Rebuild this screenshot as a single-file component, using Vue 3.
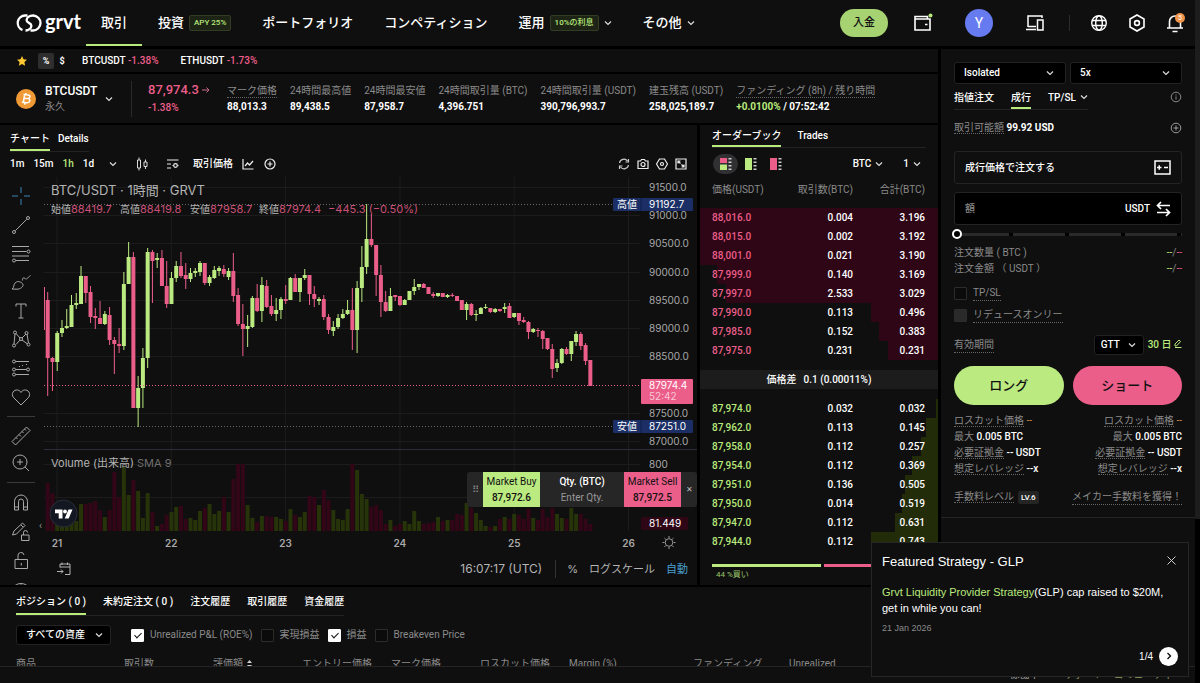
<template>
  <div class="app">
    <div class="content">
      <!-- Top navigation -->
      <header class="topbar">
        <a class="logo" href="#">
          <svg width="26" height="18" viewBox="0 0 26 18" fill="none" stroke="#fff" stroke-width="2.300">
            <path d="M11.500 1.500H9A7.500 7.500 0 0 0 6.500 16" />
            <path d="M14.500 16.500H17A7.500 7.500 0 0 0 17 1.500" />
            <path d="M17.200 1.500C13 1.500 10.600 3.800 10.600 6.300C10.600 9.200 15.400 8.600 15.400 11.700C15.400 14.500 12.500 16.600 9.500 16.500" />
          </svg>
          <span>grvt</span>
        </a>
        <nav class="nav">
          <a class="nav-item active" href="#">取引</a>
          <a class="nav-item" href="#">投資 <span class="badge">APY 25%</span></a>
          <a class="nav-item" href="#">ポートフォリオ</a>
          <a class="nav-item" href="#">コンペティション</a>
          <a class="nav-item" href="#">運用 <span class="badge">10%の利息</span>
            <svg class="chev" viewBox="0 0 8 8"><path d="M1 2.500l3 3 3-3" /></svg>
          </a>
          <a class="nav-item" href="#">その他
            <svg class="chev" viewBox="0 0 8 8"><path d="M1 2.500l3 3 3-3" /></svg>
          </a>
        </nav>
        <div class="top-actions">
          <button class="deposit">入金</button>
          <button class="icon-btn wallet" aria-label="wallet">
            <svg width="20" height="20" viewBox="0 0 20 20" fill="none" stroke="#fff" stroke-width="1.600">
              <path d="M14.500 6V3.500H2V17h15V6H2M12 11.500h2.500" />
              <circle cx="17.500" cy="2.500" r="2" fill="#b9ea7c" stroke="none" />
            </svg>
          </button>
          <button class="avatar">Y</button>
          <button class="icon-btn devices" aria-label="devices">
            <svg width="20" height="20" viewBox="0 0 20 20" fill="none" stroke="#fff" stroke-width="1.500">
              <path d="M17 5V3H3v11M1 16.500h10M12.500 7h5.500v10h-5.500zM3 13.500h8" />
            </svg>
          </button>
          <span class="divider"></span>
          <button class="icon-btn" aria-label="language">
            <svg width="18" height="18" viewBox="0 0 18 18" fill="none" stroke="#fff" stroke-width="1.400">
              <circle cx="9" cy="9" r="7.300" />
              <ellipse cx="9" cy="9" rx="3.300" ry="7.300" />
              <path d="M2 6.500h14M2 11.500h14" />
            </svg>
          </button>
          <button class="icon-btn" aria-label="settings">
            <svg width="18" height="18" viewBox="0 0 18 18" fill="none" stroke="#fff" stroke-width="1.600">
              <path d="M9 1l7 4v8l-7 4-7-4V5z" />
              <circle cx="9" cy="9" r="2.400" />
            </svg>
          </button>
          <button class="icon-btn bell" aria-label="notifications">
            <svg width="18" height="20" viewBox="0 0 18 20" fill="none" stroke="#fff" stroke-width="1.600">
              <path d="M3.500 14.500V8.500a5.500 5.500 0 0 1 11 0v6M1 15h16M6.500 18.500h5" />
            </svg>
            <span class="count">5</span>
          </button>
        </div>
      </header>

      <div class="main">
        <div class="left">
          <!-- Favourites ticker -->
          <div class="panel ticker">
            <svg width="10" height="10" viewBox="0 0 20 20" fill="#ffc831">
              <path d="M10 0l3 6.600 7 .8-5.200 4.800L16.200 19.500 10 16l-6.200 3.500 1.400-7.300L0 7.400l7-.8z" />
            </svg>
            <button class="unit on">%</button>
            <button class="unit">$</button>
            <a v-for="t in tickers" :key="t.name" class="tick" href="#">{{ t.name }} <em>{{ t.change }}</em></a>
          </div>

          <!-- Instrument summary -->
          <div class="panel summary">
            <svg class="coin" width="20" height="20" viewBox="0 0 20 20">
              <circle cx="10" cy="10" r="10" fill="#f09a36" />
              <path d="M7.500 5.500l5 .6c2 .4 2 3-.5 3.400 3 .5 2.200 4.500-1 4.300l-5-.6M8.700 5.700l-1.400 7.700M8 9.200l4.500.4M10 4l-.3 2M9 13.500l-.3 2.200" fill="none" stroke="#fff" stroke-width="1.500" />
            </svg>
            <div class="pair">
              <strong>BTCUSDT</strong>
              <span>永久</span>
            </div>
            <svg class="chev" viewBox="0 0 8 8"><path d="M1 2.500l3 3 3-3" /></svg>
            <div class="price">
              <div>87,974.3 <svg width="8" height="8" viewBox="0 0 8 8" fill="none" stroke="#c56b86"><path d="M0 4h7M4.500 1.500L7 4 4.500 6.500" /></svg></div>
              <span>-1.38%</span>
            </div>
            <dl v-for="s in stats" :key="s.label" class="stat">
              <dt><span :class="{ hint: s.hint }">{{ s.label }}</span></dt>
              <dd><span class="up">{{ s.rate }}</span>{{ s.value }}</dd>
            </dl>
          </div>

          <div class="trade-row">
            <!-- Chart -->
            <section class="panel chart-panel">
              <div class="chart-tabs">
                <a class="active" href="#">チャート</a>
                <a href="#">Details</a>
              </div>
              <div class="toolbar">
                <button>1m</button>
                <button>15m</button>
                <button class="on">1h</button>
                <button>1d</button>
                <button class="more" aria-label="intervals"><svg class="chev" viewBox="0 0 8 8"><path d="M1 2.500l3 3 3-3" /></svg></button>
                <button class="candle-btn" aria-label="candles">
                  <svg width="12" height="14" viewBox="0 0 12 14" fill="none" stroke="#ddd">
                    <path d="M1.500 3h3v8h-3zM3 .5V3M3 11v2.500M8 5h3v4.500H8zM9.500 2.500V5M9.500 9.500V12" />
                  </svg>
                </button>
                <button class="ind-btn" aria-label="indicators">
                  <svg width="12" height="10" viewBox="0 0 12 10" fill="none" stroke="#eee" stroke-width="1.200">
                    <path d="M0 1h11.500M0 5h4M0 9h4" />
                    <circle cx="8.500" cy="6.500" r="1.800" />
                    <path d="M5.500 6.500h1M10.500 6.500h1" />
                  </svg>
                </button>
                <button class="price-btn">取引価格</button>
                <button class="compare-btn" aria-label="compare">
                  <svg width="12" height="12" viewBox="0 0 12 12" fill="none" stroke="#eee" stroke-width="1.200"><path d="M1 1v10h10.500M3 8l2.500-3 2 2L11 3" /></svg>
                </button>
                <button aria-label="add">
                  <svg width="12" height="12" viewBox="0 0 12 12" fill="none" stroke="#eee" stroke-width="1.200"><circle cx="6" cy="6" r="5" /><path d="M6 3.500v5M3.500 6h5" /></svg>
                </button>
                <span class="grow"></span>
                <button aria-label="reset">
                  <svg width="12" height="12" viewBox="0 0 12 12" fill="none" stroke="#ccc" stroke-width="1.200"><path d="M1.500 5A4.500 4.500 0 0 1 9.500 3M10.500 1v3h-3M10.500 7a4.500 4.500 0 0 1-8 2M1.500 11V8h3" /></svg>
                </button>
                <button aria-label="snapshot">
                  <svg width="12" height="12" viewBox="0 0 12 12" fill="none" stroke="#eee" stroke-width="1.200"><path d="M1 3h2.500l1-1.500h3L8.500 3H11v7.500H1z" /><circle cx="6" cy="6.500" r="2" /></svg>
                </button>
                <button aria-label="chart settings">
                  <svg width="12" height="12" viewBox="0 0 12 12" fill="none" stroke="#eee" stroke-width="1.200"><path d="M3.500 1h5L11.500 6l-3 5h-5L.5 6z" /><circle cx="6" cy="6" r="1.500" /></svg>
                </button>
                <button aria-label="fullscreen">
                  <svg width="12" height="12" viewBox="0 0 12 12" fill="none" stroke="#eee" stroke-width="1.200"><path d="M1 1h10v10H1zM3 5.500V3h2.500M3 3l2.500 2.500M9 6.500V9H6.500M9 9L6.500 6.500" /></svg>
                </button>
              </div>

              <div class="chart-body">
                <div class="tools">
                  <template v-for="(group, g) in tools" :key="g">
                    <div class="tool-group" :class="'g' + g">
                      <button v-for="t in group" :key="t.name" :aria-label="t.name">
                        <svg width="20" height="20" viewBox="0 0 20 20" fill="none" :stroke="t.color || '#a9a9a9'"><path :d="t.d" /></svg>
                      </button>
                    </div>
                  </template>
                  <span class="collapse">‹</span>
                </div>

                <div class="plot">
                  <svg class="canvas" height="378" viewBox="44 177 653 378" preserveAspectRatio="xMaxYMin meet">
                    <g stroke="#1c1c1c">
                      <line v-for="p in priceTicks" :key="p.y" x1="44" x2="640" :y1="p.y" :y2="p.y" />
                      <line v-for="d in days" :key="d.x" :x1="d.x" :x2="d.x" y1="177" y2="531" />
                      <path d="M44 464.500H640M44 497.500H640" />
                    </g>
                    <rect v-for="(c, i) in candles" :key="'v' + i" :x="barX(i)" :y="531 - c[5]" width="4" :height="c[5]" :fill="c[0] ? '#273309' : '#330617'" />
                    <path d="M44 449.500H697" stroke="#2b2c3c" />
                    <path d="M44 204.500H613M44 426.500H613" stroke="#666" stroke-dasharray="1 2" />
                    <g class="legend">
                      <text x="51" y="195" font-size="13" fill="#b4b4b4">BTC/USDT · 1時間 · GRVT</text>
                      <text x="51" y="213" font-size="10" fill="#b4b4b4">始値<tspan class="dn">88419.7</tspan><tspan x="120">高値</tspan><tspan class="dn">88419.8</tspan><tspan x="190">安値</tspan><tspan class="dn">87958.7</tspan><tspan x="259">終値</tspan><tspan class="dn">87974.4</tspan><tspan class="dn" x="328">−445.3 (−0.50%)</tspan></text>
                      <text x="51" y="467" font-size="11" fill="#b4b4b4">Volume (出来高) <tspan fill="#6e6e6e">SMA 9</tspan></text>
                    </g>
                    <rect x="44" y="287" width="1" height="43" fill="#ec5e8a" />
                    <g v-for="(c, i) in candles" :key="i" :fill="c[0] ? '#bbea80' : '#ec5e8a'">
                      <rect :x="barX(i) + 1.500" :y="c[1]" width="1" :height="c[4] - c[1]" />
                      <rect :x="barX(i)" :y="c[2]" width="4" :height="c[3] - c[2]" />
                    </g>
                    <path d="M44 385.500H641" stroke="#ec5e8a" stroke-dasharray="1 2" />
                    <g class="axis">
                      <text v-for="p in priceTicks" :key="p.y" x="649" :y="p.y + 3.500">{{ p.label }}</text>
                      <text x="649" y="468">800</text>
                      <rect x="613" y="198" width="80" height="13" rx="1" fill="#1b2f66" />
                      <rect x="613" y="420" width="80" height="13" rx="1" fill="#1b2f66" />
                      <path d="M641 198v13M641 420v13" stroke="#10204c" />
                      <text class="lit" x="617" y="208">高値</text><text class="lit" x="649" y="208">91192.7</text>
                      <text class="lit" x="617" y="430">安値</text><text class="lit" x="649" y="430">87251.0</text>
                      <rect x="641" y="379" width="52" height="25" rx="1" fill="#ec5e8a" />
                      <text class="lit" x="649" y="389">87974.4</text>
                      <text x="649" y="400" fill="#f9c6d5">52:42</text>
                      <rect x="641" y="517" width="47" height="13" rx="1" fill="#2f0616" />
                      <text class="lit" x="649" y="527">81.449</text>
                      <text v-for="d in days" :key="d.x" class="day" :x="d.x" y="547">{{ d.label }}</text>
                    </g>
                    <g fill="none" stroke="#9a9a9a">
                      <circle cx="669" cy="542.500" r="3.800" />
                      <path d="M669 536v2M669 547v2M662.500 542.500h2M673.500 542.500h2M664.400 538l1.400 1.400M672.200 545.700l1.400 1.400M664.400 547l1.400-1.400M672.200 539.400l1.400-1.400" />
                    </g>
                    <circle cx="63.500" cy="513.500" r="13.500" fill="#131722" stroke="#2a2e39" />
                    <path d="M55 509.500h7.500v9h-3.800v-5.200H55zM68.500 509.500h4l-3.800 9h-4z" fill="#fff" />
                    <circle cx="65" cy="511.500" r="1.900" fill="#fff" />
                  </svg>

                  <div class="quick">
                    <span class="grip">⠿</span>
                    <button class="buy">Market Buy<b>87,972.6</b></button>
                    <label class="qty"><b>Qty. (BTC)</b><input type="text" placeholder="Enter Qty." /></label>
                    <button class="sell">Market Sell<b>87,972.5</b></button>
                    <button class="close" aria-label="close">✕</button>
                  </div>

                  <div class="chart-foot">
                    <svg width="14" height="14" viewBox="0 0 14 14" fill="none" stroke="#b4b4b4"><path d="M3 5.500V2h10v10.500H8M3 5h10M5 .5V3M10.500.5V3M0 9.500h6M4 7.500l2 2-2 2" /></svg>
                    <span class="grow"></span>
                    <span class="clock">16:07:17 (UTC)</span>
                    <button>%</button>
                    <button>ログスケール</button>
                    <button class="auto">自動</button>
                  </div>
                </div>
              </div>
            </section>

            <!-- Order book -->
            <section class="panel book">
              <div class="book-tabs">
                <a class="active" href="#">オーダーブック</a>
                <a href="#">Trades</a>
              </div>
              <div class="book-tools">
                <button v-for="v in views" :key="v.name" :class="{ on: v.on }" :aria-label="v.name">
                  <svg width="12" height="12" viewBox="0 0 12 12">
                    <rect width="7" height="12" :fill="v.bottom" />
                    <rect width="7" height="6" :fill="v.top" />
                    <rect v-if="v.on" y="5" width="7" height="1.500" fill="#333" />
                    <path d="M10 0v12" stroke="#ccc" stroke-width="3" stroke-dasharray="1.500 2" />
                  </svg>
                </button>
                <span class="grow"></span>
                <button class="pick">BTC <svg class="chev" viewBox="0 0 8 8"><path d="M1 2.500l3 3 3-3" /></svg></button>
                <button class="pick">1 <svg class="chev" viewBox="0 0 8 8"><path d="M1 2.500l3 3 3-3" /></svg></button>
              </div>
              <div class="book-head"><span>価格(USDT)</span><span>取引数(BTC)</span><span>合計(BTC)</span></div>
              <div class="asks">
                <div v-for="r in asks" :key="r[0]" class="level">
                  <i :style="{ width: r[3] + '%' }"></i>
                  <span>{{ r[0] }}</span><span>{{ r[1] }}</span><span>{{ r[2] }}</span>
                </div>
              </div>
              <div class="spread"><span>価格差</span><span>0.1 (0.00011%)</span></div>
              <div class="bids">
                <div v-for="r in bids" :key="r[0]" class="level">
                  <i :style="{ width: r[3] + '%' }"></i>
                  <span>{{ r[0] }}</span><span>{{ r[1] }}</span><span>{{ r[2] }}</span>
                </div>
              </div>
              <div class="ratio">
                <i class="r-buy"></i><i class="r-sell"></i>
              </div>
              <div class="ratio-text">44 %買い</div>
            </section>
          </div>

          <!-- Positions -->
          <section class="panel positions">
            <div class="pos-tabs">
              <a v-for="(t, i) in posTabs" :key="t" :class="{ active: i === 0 }" href="#">{{ t }}</a>
            </div>
            <div class="filters">
              <div class="select assets">
                <select aria-label="資産"><option>すべての資産</option></select>
                <svg class="chev" viewBox="0 0 8 8"><path d="M1 2.500l3 3 3-3" /></svg>
              </div>
              <label v-for="f in filters" :key="f.label"><input type="checkbox" v-model="f.on" />{{ f.label }}</label>
            </div>
            <table>
              <thead>
                <tr>
                  <th v-for="c in columns" :key="c.label" :class="c.cls">
                    {{ c.label }}
                    <svg v-if="c.sort" width="5" height="8" viewBox="0 0 5 8" fill="#ccc"><path d="M0 3l2.500-3L5 3zM0 5l2.500 3L5 5z" /></svg>
                  </th>
                </tr>
              </thead>
            </table>
          </section>
        </div>

        <!-- Order form -->
        <aside class="right">
          <section class="panel form">
            <div class="two">
              <div class="select">
                <select aria-label="margin mode"><option>Isolated</option></select>
                <svg class="chev" viewBox="0 0 8 8"><path d="M1 2.500l3 3 3-3" /></svg>
              </div>
              <div class="select">
                <select aria-label="leverage"><option>5x</option></select>
                <svg class="chev" viewBox="0 0 8 8"><path d="M1 2.500l3 3 3-3" /></svg>
              </div>
            </div>
            <div class="types">
              <div class="type-tabs">
                <a href="#">指値注文</a>
                <a class="active" href="#">成行</a>
                <a href="#">TP/SL <svg class="chev" viewBox="0 0 8 8"><path d="M1 2.500l3 3 3-3" /></svg></a>
              </div>
              <svg width="12" height="12" viewBox="0 0 12 12" fill="none" stroke="#8a8a8a"><circle cx="6" cy="6" r="4.800" /><path d="M6 5.500v3M6 3.500v1" /></svg>
            </div>
            <div class="avail">
              <span><u>取引可能額</u> <b>99.92 USD</b></span>
              <svg width="12" height="12" viewBox="0 0 12 12" fill="none" stroke="#9a9a9a"><circle cx="6" cy="6" r="4.800" /><path d="M6 3.500v5M3.500 6h5" /></svg>
            </div>
            <div class="box market">
              <span>成行価格で注文する</span>
              <svg width="17" height="15" viewBox="0 0 17 15" fill="none" stroke="#fff" stroke-width="1.500"><path d="M1 1h15v13H1zM3 7.500h4.500M5.250 5.250v4.500M10 7.500h4" /></svg>
            </div>
            <div class="box amount">
              <input type="text" placeholder="額" aria-label="額" />
              <span>USDT</span>
              <svg width="15" height="16" viewBox="0 0 15 16" fill="none" stroke="#fff" stroke-width="1.700"><path d="M14 4.500H2M5 1L1.500 4.500 5 8M1 11.500h12M10 8l3.500 3.500L10 15" /></svg>
            </div>
            <input class="slider" type="range" min="0" max="100" value="0" aria-label="数量" />
            <div class="line"><span>注文数量 ( BTC )</span><span><i class="up">--</i>/<i class="down">--</i></span></div>
            <div class="line"><span>注文金額 （ USDT ）</span><span><i class="up">--</i>/<i class="down">--</i></span></div>
            <label class="check first"><input type="checkbox" /><u>TP/SL</u></label>
            <label class="check"><input type="checkbox" disabled /><u>リデュースオンリー</u></label>
            <div class="tif">
              <u>有効期間</u>
              <div class="select small">
                <select aria-label="有効期間"><option>GTT</option></select>
                <svg class="chev" viewBox="0 0 8 8"><path d="M1 2.500l3 3 3-3" /></svg>
              </div>
              <button>30 日
                <svg width="8" height="9" viewBox="0 0 8 9" fill="none" stroke="#b9ea7c"><path d="M1 7V5l4-4 1.500 1.500L2.500 7zM1 8.500h6.500" /></svg>
              </button>
            </div>
            <div class="sides">
              <button class="long">ロング</button>
              <button class="short">ショート</button>
            </div>
            <div class="cost">
              <div v-for="n in 2" :key="n">
                <p><u>ロスカット価格</u> <i class="warn">--</i></p>
                <p>最大 <b>0.005 BTC</b></p>
                <p><u>必要証拠金</u> <b>-- USDT</b></p>
                <p><u>想定レバレッジ</u> <b>--x</b></p>
              </div>
            </div>
            <div class="fees">
              <span><u>手数料レベル</u><b>LV.6</b></span>
              <u>メイカー手数料を獲得！</u>
            </div>
          </section>
        </aside>
      </div>

      <footer class="footer">
        <a href="#">稼働中</a>
        <a class="help" href="#">サポート・コミュニティ</a>
      </footer>
    </div>
    <div class="scroll"><i></i></div>

    <!-- Announcement -->
    <div class="notice" role="dialog">
      <div class="notice-head">
        <h3>Featured Strategy - GLP</h3>
        <button aria-label="close"><svg width="9" height="9" viewBox="0 0 9 9" stroke="#ccc"><path d="M.5.5l8 8M8.500.5l-8 8" /></svg></button>
      </div>
      <p><a href="#">Grvt Liquidity Provider Strategy</a>(GLP) cap raised to $20M, get in while you can!</p>
      <time>21 Jan 2026</time>
      <div class="pager">1/4
        <button aria-label="next"><svg width="8" height="8" viewBox="0 0 8 8" fill="none" stroke="#111" stroke-width="1.400"><path d="M2.500 1l3 3-3 3" /></svg></button>
      </div>
    </div>
  </div>
</template>

<script setup>
import { ref } from 'vue'

const tickers = [
  { name: 'BTCUSDT', change: '-1.38%' },
  { name: 'ETHUSDT', change: '-1.73%' },
]

const stats = [
  { label: 'マーク価格', value: '88,013.3', hint: true },
  { label: '24時間最高値', value: '89,438.5' },
  { label: '24時間最安値', value: '87,958.7' },
  { label: '24時間取引量 (BTC)', value: '4,396.751' },
  { label: '24時間取引量 (USDT)', value: '390,796,993.7' },
  { label: '建玉残高 (USDT)', value: '258,025,189.7' },
  { label: 'ファンディング (8h) / 残り時間', rate: '+0.0100%', value: ' / 07:52:42', hint: true },
]

const tools = [
  [
    { name: 'cross', color: '#3f83b5', d: 'M10 1v6M10 13v6M1 10h6M13 10h6' },
    { name: 'trend line', d: 'M4.300 15.700L15.700 4.300M4.500 17a1.500 1.500 0 1 1-3 0a1.500 1.500 0 1 1 3 0M18.500 3a1.500 1.500 0 1 1-3 0a1.500 1.500 0 1 1 3 0' },
    { name: 'fibonacci', d: 'M1 2.500h17M1 7.500h14.500M1 12h17M4.500 16.500H18M4.500 16.500a1.500 1.500 0 1 1-3 0a1.500 1.500 0 1 1 3 0M19 7.500a1.500 1.500 0 1 1-3 0a1.500 1.500 0 1 1 3 0' },
    { name: 'brush', d: 'M1 17C3.500 15.500 2 13 4.500 10.500C7 8.500 11 10 12 12.500C12.500 15 9 17.200 6 17.200zM11.500 8.500C11.500 6 12.500 5 14 6.500C15 8 16.500 6 19.500 3.500' },
    { name: 'text', d: 'M5 5.500V3h10v2.500M10 3v14M7.500 17h5' },
    { name: 'pattern', d: 'M4 5L3 15M5 4.500L9 9M5 15.500L9 11M11 9l4-4M11 11l5.500 4M16 5l1.500 9M5.500 3.500a1.500 1.500 0 1 1-3 0a1.500 1.500 0 1 1 3 0M4.500 16.500a1.500 1.500 0 1 1-3 0a1.500 1.500 0 1 1 3 0M11.500 10a1.500 1.500 0 1 1-3 0a1.500 1.500 0 1 1 3 0M17 4a1.500 1.500 0 1 1-3 0a1.500 1.500 0 1 1 3 0M19 15.500a1.500 1.500 0 1 1-3 0a1.500 1.500 0 1 1 3 0' },
    { name: 'forecast', d: 'M4.500 3.500H18M4.500 11.500h11M4.500 16.500H18M4.500 3.500a1.500 1.500 0 1 1-3 0a1.500 1.500 0 1 1 3 0M4.500 11.500a1.500 1.500 0 1 1-3 0a1.500 1.500 0 1 1 3 0M4.500 16.500a1.500 1.500 0 1 1-3 0a1.500 1.500 0 1 1 3 0M18.500 11.500a1.500 1.500 0 1 1-3 0a1.500 1.500 0 1 1 3 0M8 9l1-1M11 7l1 1M15 7l1-1' },
    { name: 'favourites', d: 'M10 18L2.500 10.500C-.5 6.500 3 2.500 6.500 3C8.500 3.200 9.500 4.500 10 5.500C10.500 4.500 11.500 3.200 13.500 3C17 2.500 20.500 6.500 17.500 10.500z' },
  ],
  [
    { name: 'measure', d: 'M1 15.500L15.500 1L19 4.500L4.500 19zM5 11.500l1.500 1.500M8 8.500l2 2M11 5.500l1.500 1.500M13.500 3l1.500 1.500' },
    { name: 'zoom in', d: 'M16 9a7 7 0 1 1-14 0a7 7 0 1 1 14 0M14 14l4 4M9 6v6M6 9h6' },
  ],
  [
    { name: 'magnet', d: 'M3.500 17V8.500a6.500 6.500 0 0 1 13 0V17h-4V8.500a2.500 2.500 0 0 0-5 0V17zM3.500 14h4M12.500 14h4' },
    { name: 'draw lock', d: 'M1.500 13L3 9L11.500 1L14 3.500L5.500 12zM10 3l2 2M10.500 13h7.500v5.500h-7.500zM12.500 13v-2.500a2 2 0 0 1 4 0' },
    { name: 'lock', d: 'M4 8.500h12.500v9H4zM7 8.500V5a3 3 0 0 1 6-1M10.300 12v2.500' },
    { name: 'hide', d: 'M2 8C5 2 15 2 18 8M6 9a4 4 0 0 1 8 0' },
  ],
]

// price labels on the right and day labels underneath
const priceTicks = [91500, 91000, 90500, 90000, 89500, 89000, 88500, 87500, 87000].map((p) => ({
  label: p.toFixed(1),
  y: Math.round(187 + ((91500 - p) / 500) * 28.2) + 0.5,
}))
const days = [21, 22, 23, 24, 25, 26].map((d, i) => ({ label: d, x: 57 + i * 114.3 }))

// up, high, body top, body bottom, low, volume
const candles = [
  [0, 292, 300, 358, 396, 48], [0, 357, 358, 362, 391, 38], [1, 331, 333, 362, 371, 8], [1, 320, 328, 333, 337, 10],
  [1, 309, 326, 328, 329, 11], [1, 295, 305, 327, 327, 9], [1, 293, 303, 305, 309, 10], [1, 266, 276, 304, 304, 27],
  [0, 276, 276, 293, 303, 27], [0, 286, 292, 317, 323, 28], [0, 308, 316, 318, 329, 30], [0, 301, 318, 324, 324, 21],
  [1, 311, 314, 324, 325, 14], [0, 307, 315, 340, 345, 21], [0, 337, 340, 344, 374, 59], [0, 328, 344, 346, 353, 34],
  [1, 272, 284, 346, 350, 64], [1, 242, 257, 284, 284, 36], [0, 252, 257, 408, 408, 51], [1, 376, 388, 408, 427, 40],
  [1, 348, 358, 388, 408, 13], [1, 248, 252, 358, 368, 38], [0, 250, 252, 261, 303, 19], [1, 253, 258, 260, 268, 5],
  [0, 250, 258, 286, 286, 7], [0, 261, 286, 304, 308, 16], [1, 272, 278, 304, 304, 19], [1, 261, 266, 278, 282, 24],
  [0, 252, 266, 276, 278, 25], [0, 263, 275, 279, 289, 12], [1, 268, 273, 279, 282, 13], [1, 268, 271, 273, 277, 11],
  [1, 261, 263, 272, 276, 20], [0, 263, 263, 283, 285, 23], [1, 275, 277, 283, 286, 27], [1, 266, 270, 278, 279, 17],
  [1, 266, 268, 271, 276, 20], [0, 265, 269, 274, 277, 34], [1, 268, 271, 277, 280, 19], [0, 253, 271, 296, 302, 52],
  [0, 288, 295, 324, 326, 67], [0, 304, 324, 329, 356, 67], [1, 315, 326, 329, 347, 26], [1, 296, 298, 327, 328, 13],
  [0, 284, 298, 311, 312, 9], [1, 277, 285, 311, 322, 15], [0, 280, 286, 307, 308, 15], [0, 295, 306, 314, 316, 14],
  [1, 298, 310, 314, 321, 14], [1, 297, 299, 310, 319, 12], [0, 285, 299, 301, 304, 10], [1, 277, 278, 300, 300, 22],
  [0, 274, 278, 292, 292, 16], [1, 278, 278, 292, 302, 14], [1, 269, 275, 278, 280, 19], [0, 275, 275, 294, 305, 35],
  [0, 286, 294, 299, 307, 34], [1, 297, 299, 301, 305, 26], [0, 295, 299, 317, 320, 41], [0, 314, 317, 330, 334, 31],
  [1, 321, 327, 331, 336, 21], [1, 314, 318, 327, 329, 12], [1, 309, 314, 318, 319, 11], [1, 300, 310, 314, 315, 22],
  [0, 288, 310, 330, 350, 67], [1, 281, 288, 330, 353, 61], [1, 246, 267, 288, 302, 37], [1, 204, 239, 267, 274, 32],
  [0, 214, 239, 245, 247, 24], [0, 245, 245, 275, 296, 26], [0, 265, 275, 302, 317, 21], [0, 291, 302, 311, 312, 7],
  [1, 288, 296, 311, 311, 11], [0, 295, 295, 297, 301, 5], [0, 296, 296, 305, 306, 7], [1, 299, 300, 305, 305, 10],
  [1, 291, 291, 300, 300, 7], [1, 279, 287, 291, 295, 20], [1, 284, 284, 287, 290, 10], [0, 283, 284, 288, 288, 7],
  [0, 287, 287, 294, 294, 8], [0, 292, 294, 296, 298, 9], [1, 293, 293, 296, 297, 14], [0, 293, 293, 297, 297, 10],
  [1, 294, 295, 297, 298, 11], [0, 293, 295, 296, 297, 11], [0, 296, 296, 301, 301, 17], [0, 300, 300, 310, 310, 16],
  [1, 302, 304, 310, 320, 28], [0, 303, 304, 315, 316, 23], [1, 310, 314, 315, 321, 18], [1, 307, 308, 314, 314, 11],
  [1, 304, 307, 308, 309, 5], [0, 308, 308, 312, 313, 4], [1, 308, 309, 312, 313, 5], [0, 309, 309, 311, 312, 12],
  [1, 303, 307, 309, 313, 14], [0, 303, 306, 318, 318, 12], [1, 313, 313, 317, 318, 17], [0, 313, 313, 321, 325, 16],
  [0, 317, 320, 322, 323, 12], [0, 321, 322, 332, 339, 22], [1, 328, 329, 332, 333, 13], [0, 328, 330, 331, 337, 11],
  [0, 330, 331, 339, 349, 22], [0, 338, 338, 349, 350, 14], [0, 344, 349, 369, 378, 23], [1, 359, 363, 368, 372, 17],
  [1, 348, 349, 363, 364, 13], [0, 347, 349, 354, 355, 12], [1, 341, 341, 354, 361, 23], [1, 331, 334, 342, 346, 17],
  [0, 332, 334, 346, 350, 17], [0, 343, 345, 361, 365, 12], [0, 360, 360, 386, 386, 7],
]
const barX = (i) => 45.7 + i * 4.76

const views = [
  { name: 'both', on: true, top: '#ec5e8a', bottom: '#bbea80' },
  { name: 'bids', top: '#bbea80', bottom: '#bbea80' },
  { name: 'asks', top: '#ec5e8a', bottom: '#ec5e8a' },
]

// price, size, total, depth percentage
const asks = [
  ['88,016.0', '0.004', '3.196', 100], ['88,015.0', '0.002', '3.192', 100],
  ['88,001.0', '0.021', '3.190', 100], ['87,999.0', '0.140', '3.169', 93],
  ['87,997.0', '2.533', '3.029', 89], ['87,990.0', '0.113', '0.496', 28],
  ['87,985.0', '0.152', '0.383', 25], ['87,975.0', '0.231', '0.231', 21],
]
const bids = [
  ['87,974.0', '0.032', '0.032', 1], ['87,962.0', '0.113', '0.145', 5],
  ['87,958.0', '0.112', '0.257', 7], ['87,954.0', '0.112', '0.369', 11],
  ['87,951.0', '0.136', '0.505', 14], ['87,950.0', '0.014', '0.519', 15],
  ['87,947.0', '0.112', '0.631', 18], ['87,944.0', '0.112', '0.743', 28],
]

const posTabs = ['ポジション ( 0 )', '未約定注文 ( 0 )', '注文履歴', '取引履歴', '資金履歴']
const filters = ref([
  { label: 'Unrealized P&L (ROE%)', on: true },
  { label: '実現損益', on: false },
  { label: '損益', on: true },
  { label: 'Breakeven Price', on: false },
])
const columns = [
  { label: '商品', cls: 'wide' },
  { label: '取引数' },
  { label: '評価額', sort: true },
  { label: 'エントリー価格' },
  { label: 'マーク価格' },
  { label: 'ロスカット価格' },
  { label: 'Margin (%)', cls: 'widest' },
  { label: 'ファンディング', cls: 'mid' },
  { label: 'Unrealized', cls: 'rest' },
]
</script>

<style>
body {
  background: #000;
}
</style>

<style scoped>
.app {
  --green: #b9ea7c;
  --pink: #ec5e8a;
  position: relative;
  display: flex;
  height: 100vh;
  overflow: hidden;
  background: #000;
  color: #fff;
  font-family: Roboto, "Noto Sans CJK JP", sans-serif;
  font-size: 10px;
  line-height: 14px;
}

* {
  box-sizing: border-box;
}

a {
  color: inherit;
  text-decoration: none;
}

button,
input,
select {
  margin: 0;
  padding: 0;
  border: 0;
  background: none;
  color: inherit;
  font: inherit;
  appearance: none;
}

svg {
  flex: none;
}

i,
em {
  font-style: normal;
}

p,
dl,
dd,
h3 {
  margin: 0;
}

u {
  text-decoration: none;
  border-bottom: 1px dotted #666;
}

.up {
  color: var(--green);
}

.down {
  color: var(--pink);
}

.grow {
  flex: 1;
}

.chev {
  width: 8px;
  height: 8px;
  fill: none;
  stroke: #ddd;
  stroke-width: 1.2;
}

.panel {
  background: #0f0f0f;
}

.content {
  flex: 1;
  min-width: 0;
  display: flex;
  flex-direction: column;
}

.scroll {
  width: 5px;
  background: #000;
}

.scroll i {
  display: block;
  height: 76%;
  background: #1d1d1d;
}

/* top bar */
.topbar {
  display: flex;
  align-items: center;
  height: 46px;
  padding: 0 11px 0 16px;
  background: #0f0f0f;
}

.logo {
  display: flex;
  align-items: center;
  gap: 3px;
  width: 70px;
}

.logo span {
  font: 700 20px/22px Lato, sans-serif;
  padding-bottom: 4px;
}

.nav {
  display: flex;
  gap: 1px;
  height: 46px;
}

.nav-item {
  display: flex;
  align-items: center;
  gap: 5px;
  padding: 0 15px;
  border-bottom: 2px solid transparent;
  border-top: 2px solid transparent;
  font-size: 13px;
  font-weight: 500;
  white-space: nowrap;
}

.nav-item.active {
  border-bottom-color: var(--green);
}

.badge {
  padding: 0 4px;
  border: 1px solid #333d25;
  border-radius: 2px;
  background: #1d2415;
  color: var(--green);
  font-size: 8px;
  line-height: 14px;
}

.top-actions {
  display: flex;
  align-items: center;
  margin-left: auto;
}

.deposit {
  width: 48px;
  height: 28px;
  border-radius: 14px;
  background: #a6d272;
  color: #111;
  font-size: 11px;
  font-weight: 500;
}

.icon-btn {
  display: flex;
  margin-left: 20px;
}

.wallet {
  margin-left: 25px;
}

.avatar {
  width: 28px;
  height: 28px;
  margin-left: 32px;
  border-radius: 50%;
  background: #667bf0;
  font-size: 14px;
}

.devices {
  margin-left: 32px;
}

.divider {
  width: 1px;
  height: 16px;
  margin-left: 24px;
  background: #2c2c2c;
}

.bell {
  position: relative;
}

.count {
  position: absolute;
  top: 0;
  right: -1px;
  width: 10px;
  height: 10px;
  border-radius: 50%;
  background: #f0944a;
  font-size: 7px;
  line-height: 10px;
  text-align: center;
}

/* layout */
.main {
  flex: 1;
  min-height: 0;
  display: grid;
  grid-template-columns: minmax(0, 1fr) 254px;
  gap: 3px;
  padding-top: 3px;
  overflow: hidden;
}

.left {
  display: flex;
  flex-direction: column;
  gap: 2px;
  min-height: 0;
}

.ticker {
  display: flex;
  align-items: center;
  flex: none;
  height: 23px;
  padding-left: 17px;
}

.unit {
  width: 16px;
  height: 16px;
  border-radius: 2px;
  font-size: 9px;
  font-weight: 700;
}

.unit.on {
  margin-left: 11px;
  background: #2e2e2e;
}

.tick {
  margin-left: 12px;
  margin-right: 10px;
  font-weight: 500;
}

.tick em {
  color: var(--pink);
}

.summary {
  display: flex;
  align-items: center;
  flex: none;
  height: 49px;
  padding-left: 16px;
  white-space: nowrap;
}

.pair {
  display: flex;
  flex-direction: column;
  gap: 2px;
  width: 60px;
  margin-left: 9px;
}

.pair strong {
  font-size: 12px;
  font-weight: 500;
}

.pair span {
  color: #8a8a8a;
}

.price {
  margin-left: 18px;
  padding-left: 16px;
  width: 96px;
  border-left: 1px solid #2a2a2a;
  color: var(--pink);
  font-weight: 500;
  line-height: 18px;
}

.price div {
  font-size: 13px;
}

.stat {
  margin-right: 13px;
  line-height: 16px;
}

.stat dt {
  color: #8a8a8a;
}

.stat dd {
  font-weight: 700;
  white-space: pre;
}

.hint {
  display: inline-block;
  line-height: 13px;
  border-bottom: 1px dotted #666;
}

.trade-row {
  display: flex;
  flex: none;
  gap: 3px;
}

/* chart */
.chart-panel {
  flex: 1;
  min-width: 0;
}

.chart-tabs {
  display: flex;
  gap: 8px;
  width: max-content;
  height: 27px;
  margin-left: 10px;
  border-bottom: 1px solid #232323;
  font-weight: 500;
  line-height: 27px;
}

.chart-tabs .active {
  height: 26px;
  border-bottom: 2px solid var(--green);
}

.toolbar {
  display: flex;
  align-items: center;
  gap: 9px;
  height: 25px;
  padding: 0 10px 2px;
  font-weight: 500;
}

.toolbar button {
  display: flex;
}

.toolbar .on {
  color: var(--green);
}

.toolbar .more {
  margin: 0 10px 0 6px;
}

.toolbar .candle-btn {
  margin-right: 10px;
}

.toolbar .ind-btn {
  margin-right: 5px;
}

.toolbar .compare-btn {
  margin-right: 1px;
}

.toolbar .grow {
  margin-right: -20px;
}

.toolbar .grow ~ button {
  margin-left: -2px;
}

.chart-body {
  display: flex;
  height: 408px;
  overflow: hidden;
}

.tools {
  position: relative;
  width: 44px;
  padding-top: 5px;
}

.tool-group {
  display: flex;
  flex-direction: column;
  width: 28px;
  margin-left: 7px;
}

.tool-group button {
  flex: 1;
  display: flex;
  align-items: center;
  justify-content: center;
}

.g0 {
  height: 229px;
}

.g1 {
  height: 67px;
  margin-top: 5px;
  padding: 5px 0;
  border: solid #3a3a3a;
  border-width: 1px 0;
}

.g2 {
  height: 116px;
  margin-top: 5px;
}

.collapse {
  position: absolute;
  top: 342px;
  right: 2px;
  color: #999;
}

.plot {
  position: relative;
  flex: 1;
  min-width: 0;
}

.canvas {
  display: block;
  width: 100%;
}

.legend,
.axis {
  font-family: Inter, "Noto Sans CJK JP", sans-serif;
}

.axis {
  font-size: 10px;
  fill: #a9a9a9;
}

.dn {
  fill: #c94f76;
  font-size: 11px;
}

.lit {
  fill: #fff;
}

.day {
  font-weight: 600;
  text-anchor: middle;
}

.quick {
  position: absolute;
  top: 295px;
  right: 0;
  display: flex;
  width: 230px;
  height: 35px;
  border-radius: 3px;
  background: #262626;
  line-height: 16px;
}

.quick b {
  display: block;
  font-weight: 500;
}

.grip {
  width: 16px;
  color: #888;
  line-height: 35px;
  text-align: center;
}

.buy,
.sell {
  width: 57px;
  background: #bbea80;
  color: #111;
}

.sell {
  background: var(--pink);
}

.qty {
  flex: 1;
  padding-top: 2px;
  text-align: center;
}

.qty input {
  display: block;
  width: 100%;
  text-align: center;
}

.qty input::placeholder {
  color: #999;
}

.close {
  width: 16px;
  color: #bbb;
  font-size: 8px;
}

.chart-foot {
  display: flex;
  align-items: center;
  height: 28px;
  padding: 0 9px 0 13px;
  color: #b4b4b4;
  font-family: Inter, "Noto Sans CJK JP", sans-serif;
  font-size: 11px;
}

.chart-foot button {
  margin-left: 11px;
}

.clock {
  padding-right: 13px;
  border-right: 1px solid #333;
  line-height: 18px;
  font-size: 12px;
}

.chart-foot .auto {
  color: #4a9fd0;
}

/* order book */
.book {
  width: 238px;
}

.book-tabs {
  display: flex;
  gap: 16px;
  height: 23px;
  margin: 0 12px;
  border-bottom: 1px solid #232323;
  font-weight: 500;
  line-height: 22px;
}

.book-tabs .active {
  border-bottom: 2px solid var(--green);
}

.book-tools {
  display: flex;
  align-items: center;
  height: 32px;
  padding: 0 17px 0 13px;
  font-weight: 500;
}

.book-tools button {
  display: flex;
  align-items: center;
  justify-content: center;
  width: 25px;
  height: 20px;
}

.book-tools .on {
  border-radius: 10px;
  background: #303033;
}

.book-tools .pick {
  width: auto;
  gap: 4px;
  margin-left: 20px;
}

.book-head,
.level {
  position: relative;
  display: grid;
  grid-template-columns: 60px 1fr 72px;
  padding: 0 13px 0 12px;
  line-height: 19px;
}

.book-head {
  margin-bottom: 9px;
  color: #8a8a8a;
  white-space: nowrap;
}

.book-head span:nth-child(n + 2),
.level span:nth-child(n + 3) {
  text-align: right;
}

.level span {
  position: relative;
  font-weight: 500;
}

.level i {
  position: absolute;
  top: 0;
  right: 0;
  height: 19px;
  background: #2f0616;
}

.asks span:nth-child(2) {
  color: var(--pink);
}

.bids span:nth-child(2) {
  color: var(--green);
}

.bids i {
  background: #232c09;
}

.spread {
  display: flex;
  justify-content: center;
  gap: 7px;
  margin: 10px 0;
  background: #1c1c1c;
  font-weight: 500;
  line-height: 19px;
}

.ratio {
  display: flex;
  gap: 3px;
  height: 3px;
  margin: 13px 12px 1px;
}

.r-buy {
  width: 51%;
  background: #bbea80;
}

.r-sell {
  flex: 1;
  background: var(--pink);
}

.ratio-text {
  padding-left: 16px;
  color: #9cc66c;
  font-size: 8px;
  line-height: 14px;
}

/* positions */
.positions {
  flex: 1;
  min-height: 0;
  overflow: hidden;
  padding-left: 16px;
  white-space: nowrap;
}

.pos-tabs {
  display: flex;
  gap: 17px;
  width: max-content;
  height: 29px;
  border-bottom: 1px solid #232323;
  font-weight: 500;
  line-height: 30px;
}

.pos-tabs .active {
  border-bottom: 2px solid var(--green);
}

.filters {
  display: flex;
  align-items: center;
  gap: 8px;
  height: 38px;
  color: #8a8a8a;
}

.filters label {
  display: flex;
  align-items: center;
  gap: 6px;
}

input[type="checkbox"] {
  flex: none;
  width: 13px;
  height: 13px;
  border: 1px solid #2c2c2c;
  border-radius: 1px;
  background: #0b0b0b;
}

input[type="checkbox"]:checked {
  border-color: #fff;
  background: #fff;
}

input[type="checkbox"]:checked::after {
  content: "";
  display: block;
  width: 3px;
  height: 6px;
  margin: 1px 0 0 4px;
  border: solid #111;
  border-width: 0 1px 1px 0;
  transform: rotate(45deg);
}

input[type="checkbox"]:disabled {
  background: #2a2a2a;
}

.select {
  position: relative;
}

.select select {
  width: 100%;
  height: 22px;
  padding: 0 9px;
  border: 1px solid #222;
  border-radius: 3px;
  background: #000;
  color: #fff;
  font-weight: 500;
}

.select .chev {
  position: absolute;
  top: 7px;
  right: 12px;
  pointer-events: none;
}

.select.assets {
  width: 95px;
  margin-right: 12px;
  color: #fff;
}

.assets select {
  height: 20px;
}

.select.assets .chev {
  top: 6px;
  right: 8px;
}

table {
  width: 100%;
  border-collapse: collapse;
  table-layout: fixed;
}

th {
  width: 89px;
  padding: 0;
  color: #8a8a8a;
  font-weight: 400;
  line-height: 20px;
  text-align: left;
}

th svg {
  margin-left: 2px;
  vertical-align: -1px;
}

th.wide {
  width: 108px;
}

th.widest {
  width: 124px;
}

th.mid {
  width: 96px;
}

th.rest {
  width: auto;
}

/* order form */
.right {
  min-height: 0;
  background: #0f0f0f;
}

.form {
  padding: 13px 13px 12px;
  border-bottom: 1px solid #242424;
  color: #8a8a8a;
}

.form b,
.form .box {
  color: #fff;
  font-weight: 500;
}

.two {
  display: grid;
  grid-template-columns: 1fr 1fr;
  gap: 4px;
}

.types {
  display: flex;
  align-items: center;
  justify-content: space-between;
  height: 26px;
}

.type-tabs {
  display: flex;
  gap: 17px;
  height: 25px;
  border-bottom: 1px solid #232323;
  color: #fff;
  font-weight: 500;
  line-height: 25px;
}

.type-tabs .active {
  border-bottom: 2px solid var(--green);
}

.type-tabs .chev {
  margin-left: 2px;
}

.avail {
  display: flex;
  align-items: center;
  justify-content: space-between;
  height: 36px;
}

.avail b {
  font-weight: 700;
}

.box {
  display: flex;
  align-items: center;
  justify-content: space-between;
  height: 33px;
  margin-top: 5px;
  padding: 0 10px;
  border: 1px solid #242424;
  border-radius: 3px;
}

.box.amount {
  gap: 6px;
  margin-top: 8px;
  background: #000;
}

.amount input {
  flex: 1;
  min-width: 0;
}

.amount input::placeholder {
  color: #8a8a8a;
}

.slider {
  display: block;
  width: 100%;
  height: 10px;
  margin: 4px 0 6px;
}

.slider::-webkit-slider-runnable-track {
  height: 3px;
  margin-left: -2px;
  background:
    radial-gradient(circle at 50% 50%, #000 2px, transparent 2px) 31px 0 / 56px 3px,
    #2a2a2a;
}

.slider::-webkit-slider-thumb {
  width: 10px;
  height: 10px;
  margin-top: -4px;
  border: 2px solid #fff;
  border-radius: 50%;
  background: #000;
  appearance: none;
}

.line {
  display: flex;
  justify-content: space-between;
  line-height: 16px;
}

.check {
  display: flex;
  align-items: center;
  gap: 6px;
  height: 22px;
}

.check.first {
  margin-top: 5px;
}

.tif {
  display: flex;
  align-items: center;
  height: 20px;
  margin-top: 9px;
}

.tif .small {
  width: 50px;
  margin-left: auto;
}

.small select {
  height: 20px;
  padding: 0 6px;
}

.select.small .chev {
  top: 6px;
  right: 8px;
}

.tif button {
  margin-left: 4px;
  color: var(--green);
  font-weight: 500;
}

.sides {
  display: grid;
  grid-template-columns: 1fr 1fr;
  gap: 9px;
  margin: 11px 0 8px;
}

.sides button {
  height: 39px;
  border-radius: 20px;
  background: #bbea80;
  color: #111;
  font-size: 13px;
  font-weight: 500;
}

.sides .short {
  background: var(--pink);
}

.cost {
  display: flex;
  justify-content: space-between;
  line-height: 16px;
}

.cost div:last-child {
  text-align: right;
}

.warn {
  color: #d28a3e;
}

.fees {
  display: flex;
  align-items: center;
  justify-content: space-between;
  margin-top: 13px;
}

.fees b {
  margin-left: 4px;
  padding: 2px 3px;
  border-radius: 2px;
  background: #242424;
  font-size: 8px;
}

.footer {
  display: flex;
  justify-content: flex-end;
  gap: 24px;
  height: 17px;
  padding-right: 22px;
  border-top: 1px solid #242424;
  background: #0f0f0f;
  color: #aaa;
  line-height: 16px;
}

.help {
  color: #8f9a60;
}

/* announcement */
.notice {
  position: absolute;
  right: 11px;
  bottom: 6px;
  width: 318px;
  height: 135px;
  padding: 10px;
  border: 1px solid #262626;
  background: #0f0f0f;
  font-family: "Liberation Sans", sans-serif;
}

.notice-head {
  display: flex;
  align-items: center;
  justify-content: space-between;
  height: 17px;
  padding-right: 2px;
}

.notice h3 {
  font-size: 13px;
  font-weight: 400;
}

.notice p {
  margin-top: 14px;
  font-size: 11px;
  line-height: 16px;
}

.notice p a {
  color: var(--green);
}

.notice time {
  display: block;
  margin-top: 5px;
  color: #8a8a8a;
  font-size: 9px;
}

.pager {
  display: flex;
  align-items: center;
  justify-content: flex-end;
  gap: 6px;
  margin-top: 12px;
}

.pager button {
  width: 19px;
  height: 19px;
  border-radius: 50%;
  background: #fff;
  line-height: 8px;
}
</style>
